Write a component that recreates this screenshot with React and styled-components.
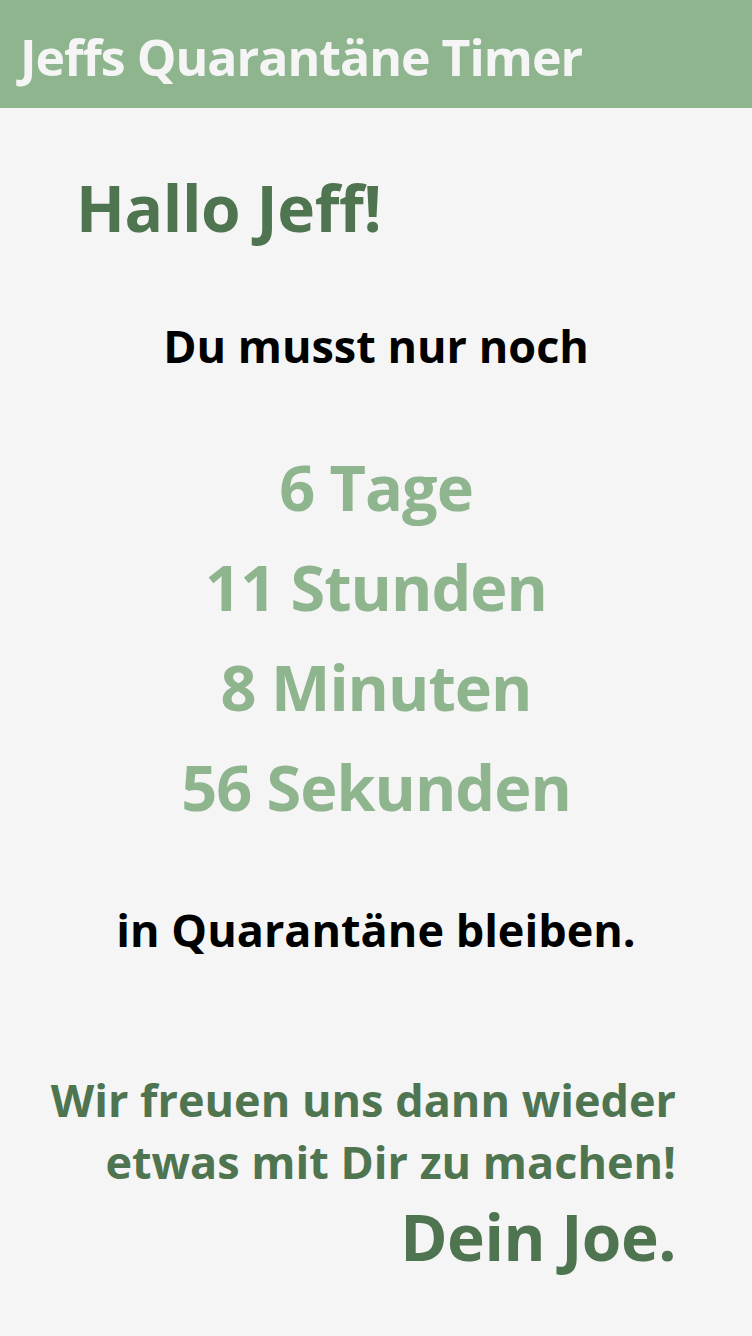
import React from "react";
import styled, { createGlobalStyle } from "styled-components";

const Global = createGlobalStyle`
  html, body { margin: 0; padding: 0; background: #f5f5f5; }
  body { font-family: "Open Sans", "Noto Sans", sans-serif; font-weight: 700; }
`;

const Page = styled.div`
  min-height: 1336px;
  background: #f5f5f5;
`;

const Header = styled.header`
  height: 108px;
  box-sizing: border-box;
  background: #8fb58f;
  display: flex;
  align-items: center;
  padding: 5px 0 0 20px;
`;

const Title = styled.h1`
  margin: 0;
  font-size: 50px;
  font-weight: 700;
  color: #f5f5f5;
  letter-spacing: -1px;
`;

const Main = styled.main`
  padding: 0 76px;
  display: flex;
  flex-direction: column;
`;

const Greeting = styled.h2`
  margin: 60px 0 0;
  font-size: 64px;
  line-height: 80px;
  color: #4f7450;
  letter-spacing: -0.4px;
`;

const Line = styled.p`
  margin: ${(p) => p.$mt}px 0 0;
  font-size: 45px;
  line-height: 60px;
  color: #000;
  text-align: center;
`;

const Countdown = styled.div`
  margin-top: 61px;
  display: flex;
  flex-direction: column;
  align-items: center;
`;

const Unit = styled.div`
  font-size: 63px;
  line-height: 100px;
  color: #8fb58f;
  letter-spacing: -1px;
`;

const Footer = styled.div`
  margin: 109px 0 0 -50px;
  text-align: right;
  color: #4f7450;
`;

const Note = styled.p`
  margin: 0;
  font-size: 45px;
  line-height: 62px;
  white-space: nowrap;
`;

const Signature = styled.p`
  margin: 4px 0 0;
  font-size: 64px;
  line-height: 80px;
  letter-spacing: -0.5px;
`;

export default function App() {
  const units = ["6 Tage", "11 Stunden", "8 Minuten", "56 Sekunden"];
  return (
    <>
      <Global />
      <Page>
        <Header>
          <Title>Jeffs Quarantäne Timer</Title>
        </Header>
        <Main>
          <Greeting>Hallo Jeff!</Greeting>
          <Line $mt={68}>Du musst nur noch</Line>
          <Countdown>
            {units.map((u) => (
              <Unit key={u}>{u}</Unit>
            ))}
          </Countdown>
          <Line $mt={63}>in Quarantäne bleiben.</Line>
          <Footer>
            <Note>Wir freuen uns dann wieder</Note>
            <Note>etwas mit Dir zu machen!</Note>
            <Signature>Dein Joe.</Signature>
          </Footer>
        </Main>
      </Page>
    </>
  );
}
